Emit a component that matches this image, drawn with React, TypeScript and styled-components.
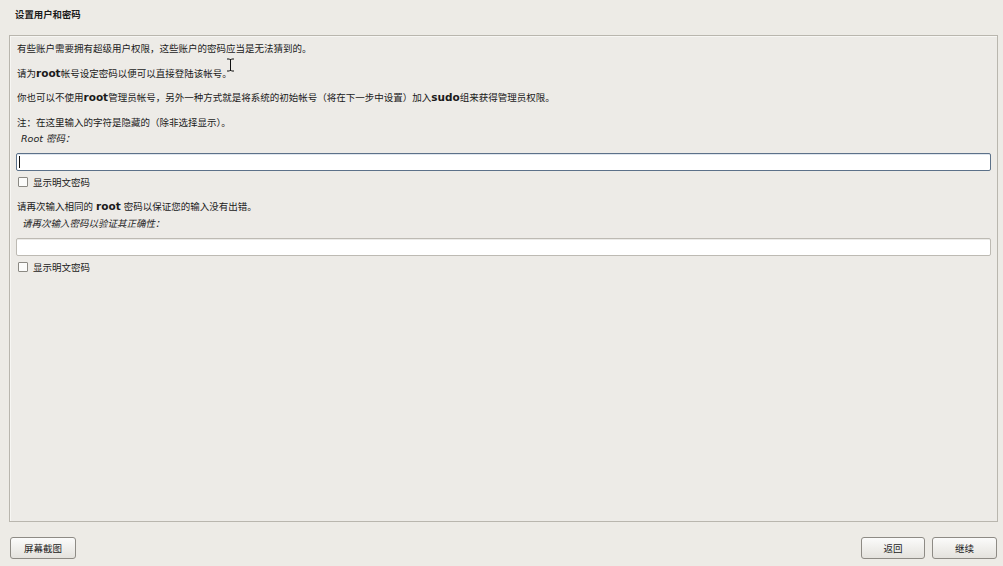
import React from "react";
import styled, { createGlobalStyle } from "styled-components";

const Global = createGlobalStyle`
  html, body { margin: 0; padding: 0; background: #edebe6; }
  body { font-family: "DejaVu Sans", "Noto Sans CJK SC", sans-serif; color: #1a1a1a; }
  * { box-sizing: border-box; }
`;

const Page = styled.div`
  position: relative;
  width: 1003px;
  height: 566px;
  display: flex;
  flex-direction: column;
  background: #edebe6;
  overflow: hidden;
`;

const Title = styled.div`
  font-size: 9.4px;
  font-weight: bold;
  line-height: 14px;
  padding: 8px 0 0 15px;
  height: 35px;
`;

const Panel = styled.div`
  flex: 1;
  margin: 0 5px 0 9px;
  border: 1px solid #b9b6ae;
  box-shadow: inset 1px 1px 0 #f7f6f3;
  background: #edebe7;
  padding: 6px 6px 0 6px;
  display: flex;
  flex-direction: column;
`;

const Para = styled.div<{ $gap?: number }>`
  font-size: 9.5px;
  line-height: 14px;
  height: 14px;
  padding-left: 1px;
  margin-bottom: ${(p) => p.$gap ?? 11}px;
  white-space: nowrap;
`;

const B = styled.b`
  font-weight: bold;
  font-size: 10.5px;
  line-height: 10px;
`;

const Label = styled.div<{ $indent: number; $gap: number }>`
  font-size: 9.5px;
  line-height: 14px;
  height: 14px;
  font-style: italic;
  padding-left: ${(p) => p.$indent}px;
  margin-bottom: ${(p) => p.$gap}px;
  color: #222;
`;

const Field = styled.div<{ $focused?: boolean; $gap: number }>`
  height: 18px;
  flex-shrink: 0;
  background: #fff;
  border: 1px solid ${(p) => (p.$focused ? "#5c7189" : "#bdbab3")};
  border-radius: 2px;
  box-shadow: ${(p) => (p.$focused ? "inset 0 1px 0 #dfe6ee" : "inset 0 1px 0 #ecebe8")};
  margin-bottom: ${(p) => p.$gap}px;
  display: flex;
  align-items: center;
  padding-left: 2px;
`;

const Caret = styled.span`
  width: 1px;
  height: 12px;
  background: #111;
`;

const CheckRow = styled.label<{ $gap: number }>`
  display: flex;
  align-items: center;
  gap: 5px;
  height: 14px;
  flex-shrink: 0;
  padding-left: 2px;
  font-size: 9.5px;
  margin-bottom: ${(p) => p.$gap}px;
`;

const Box = styled.span`
  width: 10px;
  height: 10px;
  border: 1px solid #8b8983;
  background: #fbfbfa;
  border-radius: 1px;
`;

const Footer = styled.div`
  height: 44px;
  display: flex;
  align-items: flex-start;
  padding: 15px 6px 0 10px;
  gap: 7px;
`;

const Spacer = styled.div`
  flex: 1;
`;

const Button = styled.button<{ $w: number }>`
  width: ${(p) => p.$w}px;
  height: 22px;
  border: 1px solid #8e8b85;
  border-radius: 3px;
  background: linear-gradient(#fbfbfa, #e4e2dd);
  font-family: "DejaVu Sans", "Noto Sans CJK SC", sans-serif;
  font-size: 9.5px;
  color: #1a1a1a;
  padding: 0;
`;

const Cursor = styled.svg`
  position: absolute;
  left: 226px;
  top: 58px;
`;

export default function App() {
  return (
    <Page>
      <Global />
      <Title>设置用户和密码</Title>
      <Panel>
        <Para>有些账户需要拥有超级用户权限，这些账户的密码应当是无法猜到的。</Para>
        <Para $gap={10}>请为<B>root</B>帐号设定密码以便可以直接登陆该帐号。</Para>
        <Para>
          你也可以不使用<B>root</B>管理员帐号，另外一种方式就是将系统的初始帐号（将在下一步中设置）加入<B>sudo</B>组来获得管理员权限。
        </Para>
        <Para $gap={2}>注：在这里输入的字符是隐藏的（除非选择显示）。</Para>
        <Label $indent={5} $gap={7}>Root 密码：</Label>
        <Field $focused $gap={4}>
          <Caret />
        </Field>
        <CheckRow $gap={11}>
          <Box />
          显示明文密码
        </CheckRow>
        <Para $gap={3}>
          请再次输入相同的 <B>root</B> 密码以保证您的输入没有出错。
        </Para>
        <Label $indent={6} $gap={7}>请再次输入密码以验证其正确性：</Label>
        <Field $gap={4} />
        <CheckRow $gap={0}>
          <Box />
          显示明文密码
        </CheckRow>
      </Panel>
      <Footer>
        <Button $w={66}>屏幕截图</Button>
        <Spacer />
        <Button $w={64}>返回</Button>
        <Button $w={65}>继续</Button>
      </Footer>
      <Cursor width="9" height="14" viewBox="0 0 9 14">
        <path d="M1 1h2.5M5.5 1H8M4.5 1.5v11M1 13h2.5M5.5 13H8M3.5 1.5h2M3.5 12.5h2" stroke="#111" strokeWidth="1" fill="none" />
      </Cursor>
    </Page>
  );
}
